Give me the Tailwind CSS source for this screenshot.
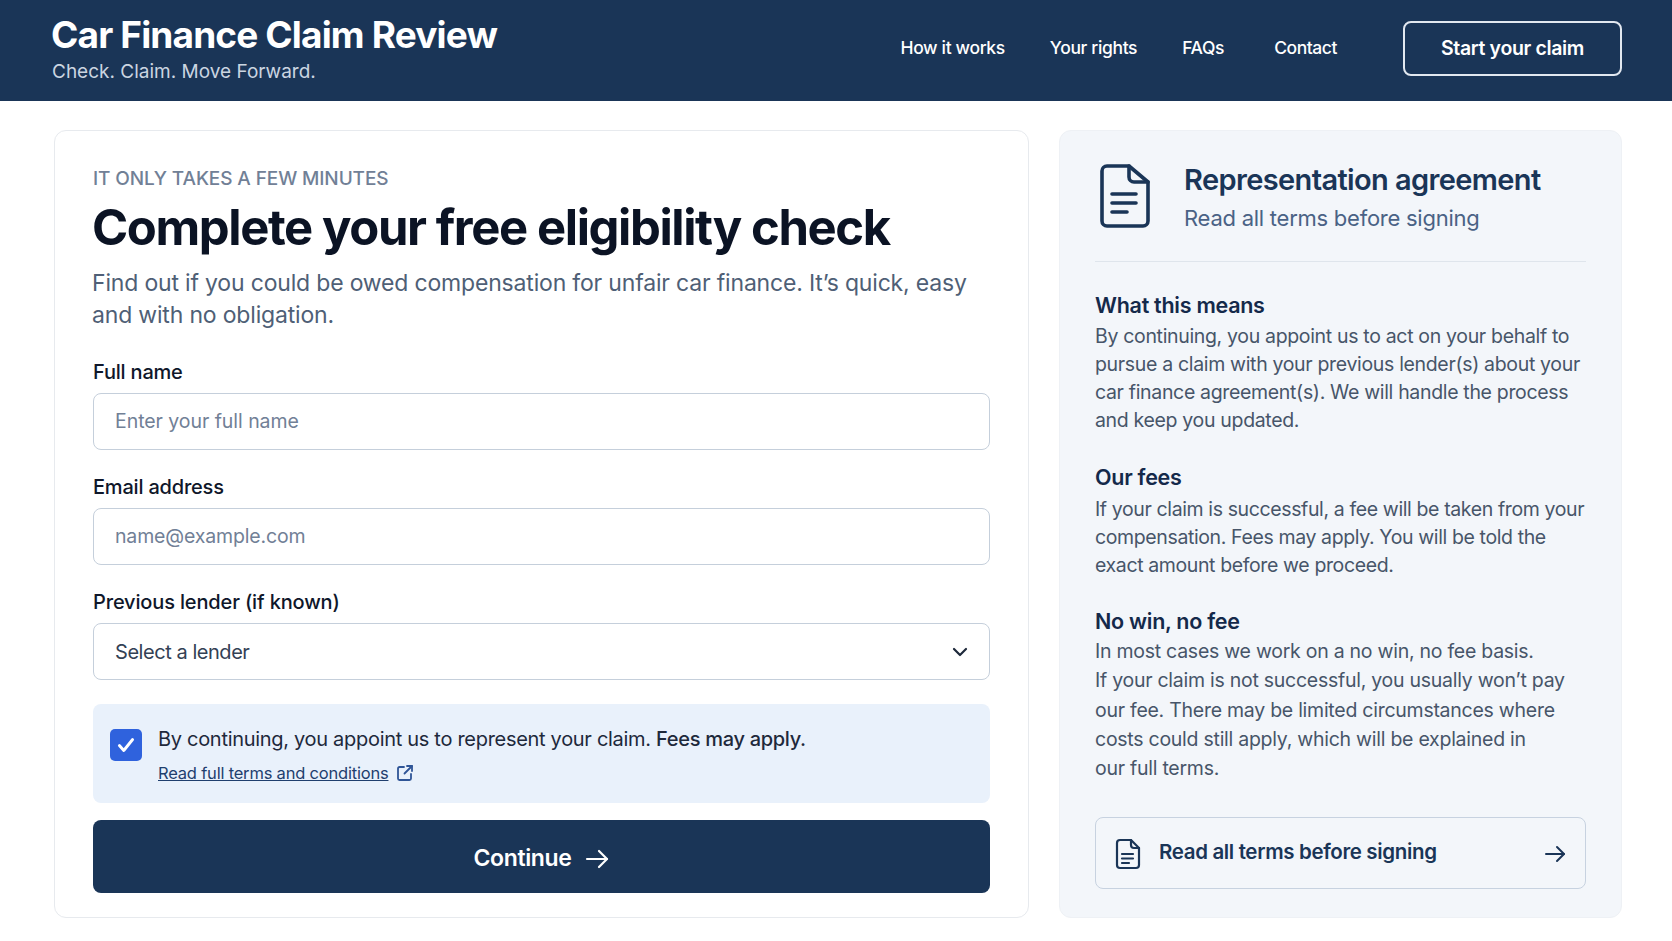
<!DOCTYPE html>
<html lang="en">
<head>
<meta charset="utf-8">
<title>Car Finance Claim Review</title>
<script src="https://cdn.jsdelivr.net/npm/@tailwindcss/browser@4"></script>
</head>
<body class="bg-white font-['Inter',sans-serif] text-[#0f172a] h-[941px] overflow-hidden">
<header class="h-[101px] bg-[#1a3557] flex items-center justify-between pl-[51px] pr-[50px] text-white">
  <div class="pb-[1px]">
    <div class="text-[37px] leading-[46px] font-bold tracking-[-0.85px] mt-[-4px]">Car Finance Claim Review</div>
    <div class="text-[19px] leading-[24px] text-[#cbd5e1] mt-[2px] ml-[1px]">Check. Claim. Move Forward.</div>
  </div>
  <nav class="flex items-center pb-[4px]">
    <a class="text-[17.5px] font-medium tracking-[-0.35px] mr-[45px]">How it works</a>
    <a class="text-[17.5px] font-medium tracking-[-0.35px] mr-[45px]">Your rights</a>
    <a class="text-[17.5px] font-medium tracking-[-0.35px] mr-[50px]">FAQs</a>
    <a class="text-[17.5px] font-medium tracking-[-0.45px] mr-[66px]">Contact</a>
    <a class="w-[219px] h-[55px] flex items-center justify-center rounded-lg border-2 border-[#e2e8f0] text-[19.5px] font-semibold tracking-[-0.35px]">Start your claim</a>
  </nav>
</header>
<main class="grid grid-cols-[975px_563px] gap-[30px] pl-[54px] pt-[29px]">
  <section class="h-[788px] rounded-xl border border-[#e7eaee] bg-white px-[38px] pt-[34px]">
    <p class="text-[19px] leading-[28px] font-medium text-[#718096] tracking-[-0.1px]">IT ONLY TAKES A FEW MINUTES</p>
    <h1 class="text-[49px] leading-[60px] font-bold tracking-[-1.4px] text-[#0b1324] mt-[5px] ml-[-1px]">Complete your free eligibility check</h1>
    <p class="text-[23px] leading-[32px] text-[#4f5f76] mt-[9px] ml-[-1px] tracking-[-0.18px]">Find out if you could be owed compensation for unfair car finance. It’s quick, easy and with no obligation.</p>
    <label class="block text-[20px] leading-[28px] font-medium text-[#0f172a] mt-[27px] tracking-[-0.2px]">Full name</label>
    <div class="mt-[7px] h-[57px] rounded-lg border border-[#c5cfdb] flex items-center px-[21px] text-[19.5px] tracking-[-0.05px] text-[#718096]">Enter your full name</div>
    <label class="block text-[20px] leading-[28px] font-medium text-[#0f172a] mt-[23px] tracking-[-0.2px]">Email address</label>
    <div class="mt-[7px] h-[57px] rounded-lg border border-[#c5cfdb] flex items-center px-[21px] text-[19.5px] tracking-[-0.15px] text-[#718096]">name@example.com</div>
    <label class="block text-[20px] leading-[28px] font-medium text-[#0f172a] mt-[23px] tracking-[-0.15px]">Previous lender (if known)</label>
    <div class="mt-[7px] h-[57px] rounded-lg border border-[#c5cfdb] flex items-center justify-between pl-[21px] pr-[19px] text-[20px] tracking-[-0.45px] text-[#334155]">
      <span>Select a lender</span>
      <svg class="w-5 h-5" viewBox="0 0 20 20" fill="none" stroke="#1e293b" stroke-width="2.2" stroke-linecap="round" stroke-linejoin="round"><path d="M4 7l6 6 6-6"/></svg>
    </div>
    <div class="mt-[24px] h-[99px] rounded-lg bg-[#e9f1fb] flex pl-[17px] pt-[20px]">
      <div class="mt-[5px] w-[32px] h-[32px] rounded-[5px] bg-[#2f62dd] flex items-center justify-center shrink-0">
        <svg class="w-[22px] h-[22px]" viewBox="0 0 20 20" fill="none" stroke="#fff" stroke-width="2.6" stroke-linecap="round" stroke-linejoin="round"><path d="M4 10.500l4 4.500 8-10"/></svg>
      </div>
      <div class="ml-[16px]">
        <p class="text-[20px] leading-[30px] text-[#1e293b] tracking-[-0.3px]">By continuing, you appoint us to represent your claim. <span class="font-medium">Fees may apply.</span></p>
        <p class="mt-[7px] flex items-center text-[16.5px] leading-[24px] text-[#1f3f6e] tracking-[-0.2px]"><span class="underline">Read full terms and conditions</span>
          <svg class="w-[18px] h-[18px] ml-[8px]" viewBox="0 0 18 18" fill="none" stroke="#2f5597" stroke-width="1.8" stroke-linecap="round" stroke-linejoin="round"><path d="M8 3H3.500A1.500 1.500 0 0 0 2 4.500V14.500A1.500 1.500 0 0 0 3.500 16H13.500A1.500 1.500 0 0 0 15 14.500V10"/><path d="M11 2H16V7"/><path d="M16 2L8.500 9.500"/></svg>
        </p>
      </div>
    </div>
    <div class="mt-[17px] h-[73px] rounded-lg bg-[#1a3557] flex items-center justify-center pt-[4px] text-white text-[23px] font-semibold tracking-[-0.35px]">
      Continue
      <svg class="w-[26px] h-[26px] ml-[12px]" viewBox="0 0 26 26" fill="none" stroke="#fff" stroke-width="2.2" stroke-linecap="round" stroke-linejoin="round"><path d="M3 13H23"/><path d="M15 5l8 8-8 8"/></svg>
    </div>
  </section>
  <aside class="h-[788px] rounded-xl border border-[#eef1f5] bg-[#f3f6fa] px-[35px] pt-[30px]">
    <div class="flex h-[101px] border-b border-[#dfe5ec]">
      <svg class="w-[50px] h-[64px] ml-[5px] mt-[3px] shrink-0" viewBox="0 0 50 64" fill="none" stroke="#1a3557" stroke-width="3.6" stroke-linecap="round" stroke-linejoin="round"><path d="M7 2H29L48 18V57A5 5 0 0 1 43 62H7A5 5 0 0 1 2 57V7A5 5 0 0 1 7 2Z"/><path d="M29 2V13A5 5 0 0 0 34 18H48"/><path d="M12 30H36M12 39H36M12 48H27"/></svg>
      <div class="ml-[34px] mt-[-1px]">
        <h2 class="text-[29px] leading-[40px] font-semibold text-[#1a3557] tracking-[-0.62px]">Representation agreement</h2>
        <p class="text-[22px] leading-[32px] text-[#4a6285] mt-[2px] tracking-[-0.25px]">Read all terms before signing</p>
      </div>
    </div>
    <h3 class="text-[21.5px] leading-[30px] font-semibold text-[#14294a] mt-[28px] tracking-[-0.27px]">What this means</h3>
    <p class="text-[19.5px] leading-[28px] text-[#475569] tracking-[-0.33px] mt-[2px]">By continuing, you appoint us to act on your behalf to pursue a claim with your previous lender(s) about your car finance agreement(s). We will handle the process and keep you updated.</p>
    <h3 class="text-[21.5px] leading-[30px] font-semibold text-[#14294a] mt-[28px] tracking-[-0.27px]">Our fees</h3>
    <p class="text-[19.5px] leading-[28px] text-[#475569] tracking-[-0.38px] mt-[3px]">If your claim is successful, a fee will be taken from your compensation. Fees may apply. You will be told the exact amount before we proceed.</p>
    <h3 class="text-[21.5px] leading-[30px] font-semibold text-[#14294a] mt-[27px] tracking-[-0.27px]">No win, no fee</h3>
    <p class="text-[19.5px] leading-[29.3px] text-[#475569] tracking-[-0.26px] mt-[1px]">In most cases we work on a no win, no fee basis.<br>If your claim is not successful, you usually won’t pay our fee. There may be limited circumstances where costs could still apply, which will be explained in<br>our full terms.</p>
    <div class="mt-[34px] h-[72px] rounded-lg border border-[#c7d2e0] flex items-center pl-[19px] pr-[18px]">
      <svg class="w-[26px] h-[32px] shrink-0 mt-[1px]" viewBox="0 0 26 32" fill="none" stroke="#1a3557" stroke-width="2.2" stroke-linecap="round" stroke-linejoin="round"><path d="M6 2H16L24 10V27A3 3 0 0 1 21 30H5A3 3 0 0 1 2 27V5A3 3 0 0 1 5 2Z"/><path d="M16 2V7A3 3 0 0 0 19 10H24"/><path d="M7 16H18M7 20.500H18M7 25H14"/></svg>
      <span class="ml-[18px] mt-[-2px] text-[20.5px] font-semibold text-[#1a3557] tracking-[-0.35px]">Read all terms before signing</span>
      <svg class="w-[24px] h-[24px] ml-auto mt-[2px]" viewBox="0 0 24 24" fill="none" stroke="#1a3557" stroke-width="2" stroke-linecap="round" stroke-linejoin="round"><path d="M3 12H21"/><path d="M14 5l7 7-7 7"/></svg>
    </div>
  </aside>
</main>
</body>
</html>
